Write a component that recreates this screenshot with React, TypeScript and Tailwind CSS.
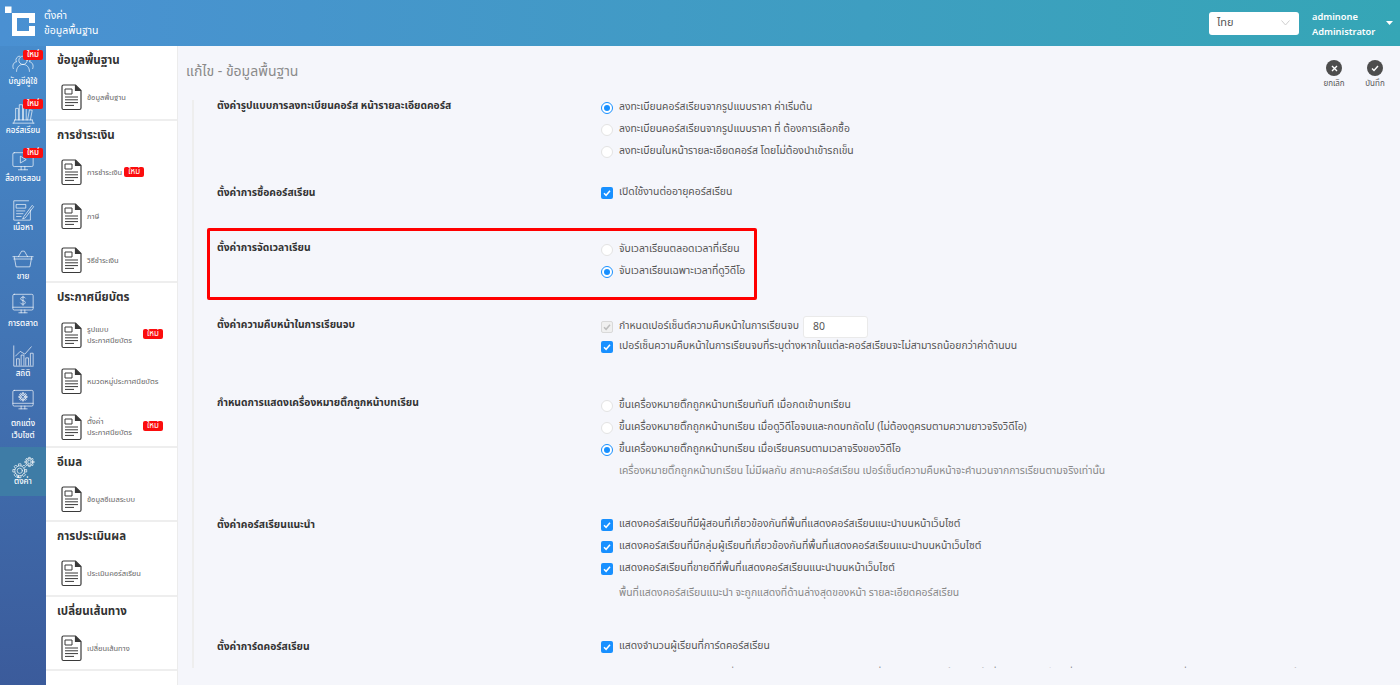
import type { ReactNode } from 'react';

const font = "font-['Noto_Sans_Thai','Noto_Sans','Noto_Sans_CJK_SC','DejaVu_Sans',sans-serif]";

const NewBadge = ({ className = '' }: { className?: string }) => (
  <span className={`inline-flex items-center justify-center bg-[#fb0d0d] text-white text-[8px] leading-none rounded-[2px] w-[20px] h-[10px] ${className}`}>ใหม่</span>
);

const Logo = () => (
  <svg width="46" height="46" viewBox="0 0 46 46" fill="#fff" className="shrink-0">
    <rect x="5" y="6.500" width="6.500" height="6.500" />
    <path fillRule="evenodd" d="M12 13H35V23H29V18H17V31H29V26H35V36H12z" />
  </svg>
);

const Stroke = ({ children }: { children: ReactNode }) => (
  <svg width="24" height="24" viewBox="0 0 26 26" fill="none" stroke="#fff" strokeOpacity="0.72" strokeWidth="1" strokeLinecap="round" strokeLinejoin="round">
    {children}
  </svg>
);

const UsersIcon = () => (
  <Stroke>
    <circle cx="13" cy="9" r="4.500" />
    <path d="M6 21c0-4.500 3-7.500 7-7.500s7 3 7 7.500" />
    <path d="M9.500 4.500a4 4 0 0 0-4 5.500M2.500 18c-1.500-4 .5-7 3.500-7.500M16.500 4.500a4 4 0 0 1 4 5.500M23.500 18c1.500-4-.5-7-3.500-7.500" />
  </Stroke>
);
const BooksIcon = () => (
  <Stroke>
    <path d="M2 24h23M4 20.500h19M3 24l1-3.500M24 24l-1-3.500" />
    <path d="M5 20.500V8h3v12.500M9 20.500V4h3.500v16.500M13.500 20.500V8h3v12.500M18 20.500l2-11 3 .6-2 10.400" />
  </Stroke>
);
const VideoIcon = () => (
  <Stroke>
    <rect x="2" y="4" width="22" height="15" rx="1.500" />
    <path d="M8 22.500h10M11 19v3.500M15 19v3.500M10.500 8l6 3.500-6 3.500z" />
  </Stroke>
);
const ContentIcon = () => (
  <Stroke>
    <path d="M21 13v11H3V3h16" />
    <path d="M6 7h10v4H6zM6 14h9M6 17h7M6 20h5M14 20l9-12 1.500 1.500-9 12-2.500 1z" />
  </Stroke>
);
const BasketIcon = () => (
  <Stroke>
    <path d="M2 10.500h22M3.500 10.500l2 11h15l2-11M8 10.500l3.500-6h3l3.500 6" />
    <path d="M3 13h20" />
  </Stroke>
);
const MoneyIcon = () => (
  <Stroke>
    <rect x="2" y="2.500" width="22" height="17" rx="1.500" />
    <path d="M2 16.500h22M11 19.500v3M15 19.500v3M8.500 22.500h9" />
    <path d="M15.500 6.500c-.5-.8-1.400-1-2.500-1-1.500 0-2.500.7-2.500 1.900 0 2.600 5 1.300 5 3.900 0 1.200-1 1.900-2.500 1.900-1.200 0-2.100-.4-2.700-1.200M13 4.500v10" />
  </Stroke>
);
const ChartIcon = () => (
  <Stroke>
    <path d="M3 2v22h21" />
    <path d="M6 23v-7h3v7M11 23v-11h3v11M16 23v-8h3v8M21 23V10h3v13" />
    <path d="M5 13l5-5 5 3 7-8" />
  </Stroke>
);
const GearPath = ({ x, y, r, teeth = 8 }: { x: number; y: number; r: number; teeth?: number }) => (
  <g transform={`translate(${x} ${y})`}>
    <circle r={r * 0.38} />
    <circle r={r * 0.72} />
    {Array.from({ length: teeth }, (_, i) => (
      <path key={i} d={`M${-r * 0.18} ${-r * 0.72}V${-r}H${r * 0.18}V${-r * 0.72}`} transform={`rotate(${(360 / teeth) * i})`} />
    ))}
  </g>
);
const DesignIcon = () => (
  <Stroke>
    <rect x="2" y="1.500" width="22" height="17" rx="1.500" />
    <path d="M2 15.500h22M11 18.500v3M15 18.500v3M8.500 21.500h9" />
    <GearPath x={13} y={8.500} r={4.500} />
  </Stroke>
);
const SettingIcon = () => (
  <Stroke>
    <GearPath x={9.500} y={16} r={7.500} />
    <GearPath x={20} y={6.500} r={5} />
  </Stroke>
);

const rail = [
  { label: ['บัญชีผู้ใช้'], icon: <UsersIcon />, isNew: true, box: 'h-[49px] pt-[6px]', gap: '' },
  { label: ['คอร์สเรียน'], icon: <BooksIcon />, isNew: true, box: 'h-[49px] pt-[6px]', gap: '' },
  { label: ['สื่อการสอน'], icon: <VideoIcon />, isNew: true, box: 'h-[48px] pt-[5px]', gap: '' },
  { label: ['เนื้อหา'], icon: <ContentIcon />, box: 'h-[49px] pt-[6px]', gap: '' },
  { label: ['ขาย'], icon: <BasketIcon />, box: 'h-[49px] pt-[6px]', gap: '' },
  { label: ['การตลาด'], icon: <MoneyIcon />, box: 'h-[48px] pt-[2px]', gap: 'h-[2px]' },
  { label: ['สถิติ'], icon: <ChartIcon />, box: 'h-[49px] pt-[6px]', gap: '' },
  { label: ['ตกแต่ง', 'เว็บไซต์'], icon: <DesignIcon />, box: 'h-[60px] pt-[2px]', gap: 'h-[5px]' },
  { label: ['ตั้งค่า'], icon: <SettingIcon />, active: true, box: 'h-[49px] pt-[9px]', gap: 'h-0 -mt-[4px]' },
];

const DocIcon = () => (
  <svg width="21" height="27" viewBox="0 0 21 27" fill="none" stroke="#3a3a3a" strokeWidth="1.200" className="shrink-0">
    <path d="M2.500 1h12l5.500 5.500V24a1.500 1.500 0 0 1-1.500 1.500h-16A1.500 1.500 0 0 1 1 24V2.500A1.500 1.500 0 0 1 2.500 1z" />
    <path d="M14.500 1v5.500H20" fill="#3a3a3a" />
    <path d="M4 5h7v5H4z" strokeWidth="1" />
    <path d="M4 13h13M4 15.800h13M4 18.600h13M4 21.400h9" strokeWidth="1" />
  </svg>
);

const groups = [
  { title: 'ข้อมูลพื้นฐาน', h: 'h-[75px]', row: 'h-[44px]', items: [{ t: ['ข้อมูลพื้นฐาน'] }] },
  { title: 'การชำระเงิน', h: 'h-[162px]', row: 'h-[44px]', items: [{ t: ['การชำระเงิน'], inlineNew: true }, { t: ['ภาษี'] }, { t: ['วิธีชำระเงิน'] }] },
  { title: 'ประกาศนียบัตร', h: 'h-[165px]', row: 'h-[46px]', items: [{ t: ['รูปแบบ', 'ประกาศนียบัตร'], isNew: true }, { t: ['หมวดหมู่ประกาศนียบัตร'] }, { t: ['ตั้งค่า', 'ประกาศนียบัตร'], isNew: true }] },
  { title: 'อีเมล', h: 'h-[74px]', row: 'h-[44px]', items: [{ t: ['ข้อมูลอีเมลระบบ'] }] },
  { title: 'การประเมินผล', h: 'h-[75px]', row: 'h-[44px]', items: [{ t: ['ประเมินคอร์สเรียน'] }] },
  { title: 'เปลี่ยนเส้นทาง', h: 'h-[74px]', row: 'h-[44px]', items: [{ t: ['เปลี่ยนเส้นทาง'] }] },
];

const Radio = ({ on }: { on?: boolean }) =>
  on ? (
    <span className="w-[12px] h-[12px] rounded-full bg-white border border-[#1890ff] flex items-center justify-center shrink-0">
      <span className="w-[6px] h-[6px] rounded-full bg-[#1890ff]" />
    </span>
  ) : (
    <span className="w-[12px] h-[12px] rounded-full bg-white border border-[#e3e3e3] shrink-0" />
  );

const Check = ({ disabled }: { disabled?: boolean }) => (
  <span className={`w-[12px] h-[12px] rounded-[2px] flex items-center justify-center shrink-0 ${disabled ? 'bg-[#f0f0f0] border border-[#d9d9d9]' : 'bg-[#1890ff]'}`}>
    <svg width="8" height="8" viewBox="0 0 8 8" fill="none" stroke={disabled ? '#bdbdbd' : '#fff'} strokeWidth="1.500">
      <path d="M1 4.200 3.100 6.300 7 1.700" />
    </svg>
  </span>
);

const Opt = ({ type, on, disabled, h = 'h-[22px]', children }: { type: 'r' | 'c'; on?: boolean; disabled?: boolean; h?: string; children: ReactNode }) => (
  <div className={`flex items-center gap-[6px] ${h} text-[10.400px] text-[#555] whitespace-nowrap`}>
    {type === 'r' ? <Radio on={on} /> : <Check disabled={disabled} />}
    {children}
  </div>
);

const Note = ({ className = '', children }: { className?: string; children: ReactNode }) => (
  <div className={`pl-[18px] h-[22px] flex items-center text-[10.400px] text-[#888] whitespace-nowrap ${className}`}>{children}</div>
);

const Row = ({ label, className, ctrl, labelTop = '', children }: { label: string; className: string; ctrl: string; labelTop?: string; children: ReactNode }) => (
  <div className={`flex ${className}`}>
    <div className={`w-[394px] shrink-0 pl-[10px] text-[10.300px] font-bold text-[#333] leading-[14px] whitespace-nowrap ${labelTop}`}>{label}</div>
    <div className={ctrl}>{children}</div>
  </div>
);

export default function App() {
  return (
    <div className={`w-[1400px] h-[685px] overflow-hidden flex flex-col bg-[#f5f6fb] ${font}`}>
      <header className="h-[46px] shrink-0 flex items-center bg-gradient-to-r from-[#4a90d2] to-[#35a6b6] text-white">
        <Logo />
        <div className="text-[10.500px] leading-[15px] -ml-[2px] mt-[1px]">
          <div>ตั้งค่า</div>
          <div>ข้อมูลพื้นฐาน</div>
        </div>
        <div className="ml-auto flex items-center">
          <div className="w-[90px] h-[23px] bg-white rounded-[3px] flex items-center justify-between pl-[8px] pr-[9px] text-[11px] text-[#555] mr-[13px]">
            ไทย
            <svg width="9" height="6" viewBox="0 0 9 6" fill="none" stroke="#cfcfcf"><path d="M.5.5 4.500 5 8.500.5" /></svg>
          </div>
          <div className="w-[64px] mt-[1px] text-[9.300px] font-semibold leading-[15px] font-['Noto_Sans',sans-serif]">
            <div>adminone</div>
            <div>Administrator</div>
          </div>
          <svg width="7" height="4" viewBox="0 0 7 4" fill="#fff" className="ml-[10px] mr-[7px]"><path d="M0 0h7L3.500 4z" /></svg>
        </div>
      </header>
      <div className="flex-1 flex min-h-0">
        <nav className="w-[46px] shrink-0 bg-gradient-to-b from-[#478bcb] to-[#3b5b9b]">
          {rail.map((r) => (
            <div key={r.label[0]} className={`relative ${r.box} flex flex-col items-center text-white text-[8px] font-medium leading-[12px] ${r.active ? 'bg-[#3e7ca6]' : ''}`}>
              {r.isNew && <NewBadge className="absolute left-[23px] top-[4px]" />}
              {r.icon}
              {r.gap && <span className={`${r.gap} shrink-0`} />}
              {r.label.map((l) => (
                <span key={l} className="whitespace-nowrap">{l}</span>
              ))}
            </div>
          ))}
        </nav>
        <aside className="w-[132px] shrink-0 bg-white border-r border-[#ececec]">
          {groups.map((g) => (
            <section key={g.title} className={`${g.h} border-b-2 border-[#eeeeee] pl-[11px] pt-[7px]`}>
              <h3 className="text-[11.500px] font-bold text-[#333] leading-[16px] mb-[6px]">{g.title}</h3>
              {g.items.map((i) => (
                <div key={i.t[0]} className={`${g.row} flex items-center pl-[4px] relative`}>
                  <DocIcon />
                  <div className="ml-[5px] text-[7.500px] leading-[11px] text-[#666] whitespace-nowrap">
                    {i.t.map((l) => (
                      <div key={l} className="flex items-center">
                        {l}
                        {i.inlineNew && <NewBadge className="ml-[2px]" />}
                      </div>
                    ))}
                  </div>
                  {i.isNew && <NewBadge className="absolute right-[14px] top-[17px]" />}
                </div>
              ))}
            </section>
          ))}
        </aside>
        <main className="flex-1 min-w-0 flex flex-col pl-[8px]">
          <div className="h-[54px] shrink-0 flex items-start justify-between">
            <h1 className="mt-[16px] text-[14px] leading-[20px] text-[#8a8a8a]">แก้ไข - ข้อมูลพื้นฐาน</h1>
            <div className="flex gap-[19px] mt-[14px] mr-[14px] text-[8px] text-[#555]">
              <div className="flex flex-col items-center w-[22px]">
                <span className="w-[16px] h-[16px] rounded-full bg-[#4d4d4d] flex items-center justify-center">
                  <svg width="7" height="7" viewBox="0 0 7 7" stroke="#fff" strokeWidth="1.400"><path d="M1 1l5 5M6 1 1 6" /></svg>
                </span>
                <span className="mt-[2px] whitespace-nowrap">ยกเลิก</span>
              </div>
              <div className="flex flex-col items-center w-[22px]">
                <span className="w-[16px] h-[16px] rounded-full bg-[#4d4d4d] flex items-center justify-center">
                  <svg width="8" height="7" viewBox="0 0 8 7" fill="none" stroke="#fff" strokeWidth="1.400"><path d="M1 3.500 3 5.500 7 1" /></svg>
                </span>
                <span className="mt-[2px] whitespace-nowrap">บันทึก</span>
              </div>
            </div>
          </div>
          <div className="h-[568px] shrink-0 overflow-hidden ml-[6px] border-l-2 border-[#eeeeee] pl-[13px]">
            <div className="-mt-[1px]">
              <Row label="ตั้งค่ารูปแบบการลงทะเบียนคอร์ส หน้ารายละเอียดคอร์ส" className="h-[87px]" ctrl="-mt-[2px]">
                <Opt type="r" on>ลงทะเบียนคอร์สเรียนจากรูปแบบราคา ค่าเริ่มต้น</Opt>
                <Opt type="r">ลงทะเบียนคอร์สเรียนจากรูปแบบราคา ที่ ต้องการเลือกซื้อ</Opt>
                <Opt type="r">ลงทะเบียนในหน้ารายละเอียดคอร์ส โดยไม่ต้องนำเข้ารถเข็น</Opt>
              </Row>
              <Row label="ตั้งค่าการซื้อคอร์สเรียน" className="h-[43px]" ctrl="-mt-[4px]">
                <Opt type="c" on>เปิดใช้งานต่ออายุคอร์สเรียน</Opt>
              </Row>
              <Row
                label="ตั้งค่าการจัดเวลาเรียน"
                className="h-[72px] w-[550px] -mt-[1px] mb-[18px] rounded-[2px] outline-[3px] outline-[#f00] -outline-offset-[3px]"
                labelTop="pt-[13px]"
                ctrl="pt-[11px]"
              >
                <Opt type="r">จับเวลาเรียนตลอดเวลาที่เรียน</Opt>
                <Opt type="r" on>จับเวลาเรียนเฉพาะเวลาที่ดูวิดีโอ</Opt>
              </Row>
              <Row label="ตั้งค่าความคืบหน้าในการเรียนจบ" className="h-[78px]" ctrl="-mt-[2px]">
                <Opt type="c" disabled h="h-[22px] mb-[-2px]">
                  กำหนดเปอร์เซ็นต์ความคืบหน้าในการเรียนจบ
                  <span className="-ml-[2px] w-[65px] h-[22px] bg-white border border-[#eaeaea] rounded-[3px] flex items-center pl-[9px] text-[#555] font-['Noto_Sans',sans-serif]">80</span>
                </Opt>
                <Opt type="c" on>เปอร์เซ็นความคืบหน้าในการเรียนจบที่ระบุต่างหากในแต่ละคอร์สเรียนจะไม่สามารถน้อยกว่าค่าด้านบน</Opt>
              </Row>
              <Row label="กำหนดการแสดงเครื่องหมายติ๊กถูกหน้าบทเรียน" className="h-[122px]" ctrl="-mt-[1px]">
                <Opt type="r">ขึ้นเครื่องหมายติ๊กถูกหน้าบทเรียนทันที เมื่อกดเข้าบทเรียน</Opt>
                <Opt type="r">ขึ้นเครื่องหมายติ๊กถูกหน้าบทเรียน เมื่อดูวิดีโอจบและกดบทถัดไป (ไม่ต้องดูครบตามความยาวจริงวิดีโอ)</Opt>
                <Opt type="r" on>ขึ้นเครื่องหมายติ๊กถูกหน้าบทเรียน เมื่อเรียนครบตามเวลาจริงของวิดีโอ</Opt>
                <Note>เครื่องหมายติ๊กถูกหน้าบทเรียน ไม่มีผลกับ สถานะคอร์สเรียน เปอร์เซ็นต์ความคืบหน้าจะคำนวนจากการเรียนตามจริงเท่านั้น</Note>
              </Row>
              <Row label="ตั้งค่าคอร์สเรียนแนะนำ" className="h-[122px]" ctrl="-mt-[4px]">
                <Opt type="c" on>แสดงคอร์สเรียนที่มีผู้สอนที่เกี่ยวข้องกันที่พื้นที่แสดงคอร์สเรียนแนะนำบนหน้าเว็บไซต์</Opt>
                <Opt type="c" on>แสดงคอร์สเรียนที่มีกลุ่มผู้เรียนที่เกี่ยวข้องกันที่พื้นที่แสดงคอร์สเรียนแนะนำบนหน้าเว็บไซต์</Opt>
                <Opt type="c" on>แสดงคอร์สเรียนที่ขายดีที่พื้นที่แสดงคอร์สเรียนแนะนำบนหน้าเว็บไซต์</Opt>
                <Note className="mt-[3px]">พื้นที่แสดงคอร์สเรียนแนะนำ จะถูกแสดงที่ด้านล่างสุดของหน้า รายละเอียดคอร์สเรียน</Note>
              </Row>
              <Row label="ตั้งค่าการ์ดคอร์สเรียน" className="h-[60px]" ctrl="-mt-[4px]">
                <Opt type="c" on>แสดงจำนวนผู้เรียนที่การ์ดคอร์สเรียน</Opt>
                <Note className="mt-[6px]">ระบบจะแสดงจำนวนผู้เรียนที่การ์ดคอร์สเรียน โดยนับรวมผู้เรียนที่ลงทะเบียนเรียนทั้งหมด ทั้งที่กำลังเรียนอยู่และที่เรียนจบแล้ว รวมถึงผู้เรียนที่หมดอายุการเรียนในคอร์สนั้นด้วย</Note>
              </Row>
            </div>
          </div>
        </main>
      </div>
    </div>
  );
}
